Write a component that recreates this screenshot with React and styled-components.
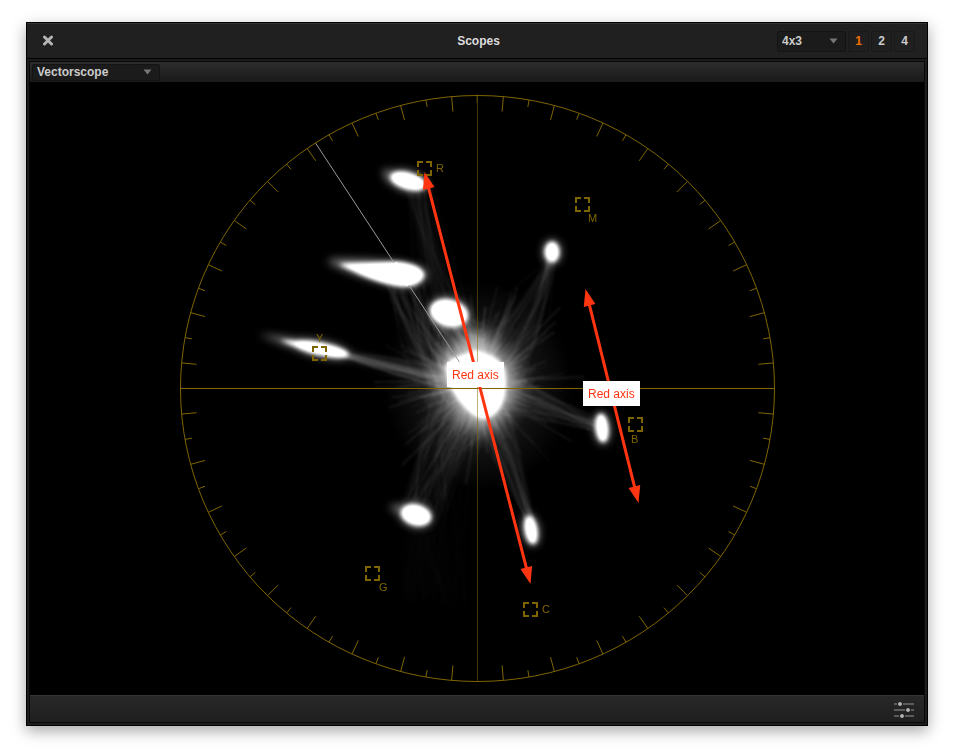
import React, { useState } from 'react'
import styled, { createGlobalStyle } from 'styled-components';

const CX = 477.5;
const CY = 388.5;
const RX = 297;
const RY = 293;
const GOLD = '#7f6500';
const RED = '#ff3512';

// small seeded generator, keeps the trace the same on every render
const seeded = (seed) => () => {
    seed = (seed * 16807) % 2147483647;
    return seed / 2147483647;
}

const targets = [
    { name: 'R', x: 417, y: 161, tx: 436, ty: 172 },
    { name: 'M', x: 575, y: 197, tx: 588, ty: 222 },
    { name: 'B', x: 628, y: 417, tx: 631, ty: 443 },
    { name: 'Y', x: 312, y: 346, tx: 316, ty: 342 },
    { name: 'G', x: 365, y: 566, tx: 379, ty: 591 },
    { name: 'C', x: 523, y: 602, tx: 542, ty: 613 },
];

const blobs = [
    { x: 408, y: 181, rx: 18, ry: 8, rot: 16 },
    { x: 449, y: 313, rx: 19, ry: 13, rot: 15 },
    { x: 321, y: 349, rx: 28, ry: 6, rot: 12 },
    { x: 552, y: 252, rx: 7, ry: 10, rot: 0 },
    { x: 602, y: 428, rx: 6, ry: 14, rot: -6 },
    { x: 531, y: 530, rx: 6, ry: 14, rot: -10 },
    { x: 416, y: 515, rx: 15, ry: 10, rot: 14 },
];

// from / to points with their spread, and how far the middle bows sideways
const beams = [
    { from: [470, 370], to: [418, 190], spread: [20, 14], bow: [-24, 6], count: 50, alpha: 0.02 },
    { from: [450, 390], to: [405, 284], spread: [20, 20], bow: [-14, 10], count: 44, alpha: 0.035 },
    { from: [465, 382], to: [335, 352], spread: [12, 5], bow: [0, 4], count: 34, alpha: 0.035 },
    { from: [465, 350], to: [445, 318], spread: [28, 16], bow: [0, 0], count: 40, alpha: 0.05 },
    { from: [490, 365], to: [552, 258], spread: [34, 5], bow: [20, 12], count: 50, alpha: 0.023 },
    { from: [495, 388], to: [598, 426], spread: [22, 10], bow: [4, 0], count: 50, alpha: 0.027 },
    { from: [488, 405], to: [530, 520], spread: [22, 5], bow: [2, -6], count: 50, alpha: 0.022 },
    { from: [465, 400], to: [424, 508], spread: [36, 24], bow: [-12, -10], count: 70, alpha: 0.025 },
    { from: [460, 410], to: [435, 590], spread: [30, 34], bow: [-16, 0], count: 50, alpha: 0.009 },
    { from: [420, 520], to: [430, 596], spread: [12, 26], bow: [-6, 0], count: 36, alpha: 0.008 },
];

const makeBeam = ({ from, to, spread, bow, count }, index) => {
    const rnd = seeded(301 + index * 97);
    const jitter = (amount) => (rnd() - 0.5) * 2 * amount;
    return Array.from({ length: count }, () => {
        const x1 = from[0] + jitter(spread[0]);
        const y1 = from[1] + jitter(spread[0]);
        const x2 = to[0] + jitter(spread[1]);
        const y2 = to[1] + jitter(spread[1] / 2);
        const mx = (x1 + x2) / 2 + bow[0] * rnd() + jitter(9);
        const my = (y1 + y2) / 2 + bow[1] * rnd() + jitter(9);
        return `M${x1} ${y1}Q${mx} ${my} ${x2} ${y2}`;
    });
}

const makeRays = () => {
    const rnd = seeded(77);
    return Array.from({ length: 340 }, () => {
        const a = rnd() * Math.PI * 2;
        const inner = 18 + rnd() * 22;
        const reach = inner + 10 + rnd() * rnd() * 80;
        const bend = a + (rnd() - 0.5) * 0.3;
        return {
            d: `M${478 + Math.cos(a) * inner} ${384 + Math.sin(a) * inner}L${478 + Math.cos(bend) * reach} ${384 + Math.sin(bend) * reach}`,
            alpha: 0.02 + rnd() * 0.06
        };
    });
}

const beamPaths = beams.map(makeBeam);
const rays = makeRays();

const ticks = [];
for (let deg = 5; deg < 360; deg += 5) {
    if (deg % 90 === 0) continue;
    const a = deg * Math.PI / 180;
    const x = CX + Math.cos(a) * RX;
    const y = CY + Math.sin(a) * RY;
    const len = deg % 10 === 5 ? 15 : 7;
    ticks.push(`M${x} ${y}L${x - Math.cos(a) * len} ${y - Math.sin(a) * len}`);
}

function Blobs({ grow }) {
    return blobs.map((b, i) => (
        <ellipse key={i} cx={b.x} cy={b.y} rx={b.rx + grow} ry={b.ry + grow}
            transform={`rotate(${b.rot} ${b.x} ${b.y})`} />
    ));
}

function Trace() {
    return (
        <g>
            <ellipse cx="478" cy="386" rx="95" ry="105" fill="url(#haze)" />
            <g fill="none" stroke="#fff" strokeWidth="2" filter="url(#soft1)">
                {beamPaths.map((paths, i) =>
                    paths.map((d, j) => <path key={`${i}-${j}`} d={d} opacity={beams[i].alpha} />)
                )}
                {rays.map((ray, i) => <path key={i} d={ray.d} opacity={ray.alpha} />)}
            </g>
            <g fill="#fff" filter="url(#soft4)" opacity="0.55">
                <Blobs grow={2} />
                <path d="M328 260C350 259 380 260 400 262C416 264 426 268 427 275C425 284 414 289 400 287C376 282 352 274 328 262Z" />
                <path d="M382 170L402 172L402 184L388 182Z" />
                <path d="M258 334L310 341L300 350Z" />
                <path d="M340 350L450 376L450 384L340 357Z" opacity="0.3" />
                <path d="M388 506L410 505L410 520Z" />
            </g>
            <g fill="#fff" filter="url(#soft2)">
                <Blobs grow={0} />
                <path d="M339 264C358 263 378 263 396 262C412 263 423 268 424 275C422 283 412 287 400 286C376 283 358 273 339 264Z" />
                <path d="M280 340L305 342L302 349Z" />
            </g>
            <path d="M440 366C446 350 462 346 474 326C490 346 506 356 511 374C516 400 500 424 480 427C462 420 444 394 440 366Z"
                fill="#fff" opacity="0.6" filter="url(#soft8)" />
            <path d="M446 366C450 357 466 354 476 350C488 354 502 358 505 372C508 400 500 417 482 419C466 414 446 388 446 366Z"
                fill="#fff" filter="url(#soft2)" />
        </g>
    );
}

function Graticule() {
    return (
        <g fill="none" stroke={GOLD}>
            <ellipse cx={CX} cy={CY} rx={RX} ry={RY} />
            <path d={ticks.join('')} />
            <path d={`M180 ${CY}H775`} />
            <path d={`M${CX} 96V682`} opacity="0.5" />
            <path d="M477 94V103" opacity="0.6" />
            {targets.map((t) => (
                <path key={t.name} transform={`translate(${t.x} ${t.y})`} strokeWidth="2"
                    d="M1 6V1H6M9 1H14V6M14 9V14H9M6 14H1V9" />
            ))}
            {targets.map((t) => (
                <ScopeText key={t.name} $size={11} x={t.tx} y={t.ty} fill={GOLD}>{t.name}</ScopeText>
            ))}
        </g>
    );
}

function Arrow({ from, to }) {
    const length = Math.hypot(to[0] - from[0], to[1] - from[1]);
    const angle = Math.atan2(to[1] - from[1], to[0] - from[0]) * 180 / Math.PI;
    return (
        <g fill={RED} transform={`translate(${from}) rotate(${angle})`}>
            <path d={`M15 0H${length - 15}`} stroke={RED} strokeWidth="3" />
            <path d="M0 0L17 6V-6Z" />
            <path d={`M${length} 0l-17 6v-12Z`} />
        </g>
    );
}

function AxisLabel({ x, y }) {
    return (
        <g>
            <rect x={x} y={y} width="57" height="25" fill="#fff" />
            <ScopeText $size={12} x={x + 5} y={y + 17} fill={RED}>Red axis</ScopeText>
        </g>
    );
}

function Picker({ label, value, wide }) {
    return (
        <PickerBox $wide={wide}>
            <select aria-label={label} defaultValue={value}>
                <option>{value}</option>
            </select>
            <svg width="9" height="6" viewBox="0 0 9 6"><path d="M0.5 0.5H8.5L4.5 5.5Z" fill="#777" /></svg>
        </PickerBox>
    );
}

export default function App() {
    const [layout, setLayout] = useState(1);

    return (
        <Page>
            <GlobalStyle />
            <Window>
                <Header>
                    <CloseButton aria-label="Close">
                        <svg width="12" height="12" viewBox="0 0 12 12">
                            <path d="M2.5 2L9.5 9M9.5 2L2.5 9" stroke="#b4b4b4" strokeWidth="3" strokeLinecap="round" />
                        </svg>
                    </CloseButton>
                    <h1>Scopes</h1>
                    <Controls>
                        <Picker label="Grid" value="4x3" />
                        {[1, 2, 4].map((n) => (
                            <CountButton key={n} $active={layout === n} onClick={() => setLayout(n)}>{n}</CountButton>
                        ))}
                    </Controls>
                </Header>
                <Panel>
                    <Toolbar>
                        <Picker label="Scope" value="Vectorscope" wide />
                    </Toolbar>
                    <Scope viewBox="30 82 894 613">
                        <defs>
                            {[1, 2, 4, 8].map((n) => (
                                <filter key={n} id={`soft${n}`} filterUnits="userSpaceOnUse" x="30" y="82" width="894" height="613"
                                    colorInterpolationFilters="sRGB">
                                    <feGaussianBlur stdDeviation={n} />
                                    {n === 2 && (
                                        <feComponentTransfer>
                                            <feFuncA type="linear" slope="1.3" />
                                        </feComponentTransfer>
                                    )}
                                </filter>
                            ))}
                            <radialGradient id="haze">
                                <stop offset="0" stopColor="#fff" stopOpacity="0.5" />
                                <stop offset="0.4" stopColor="#fff" stopOpacity="0.22" />
                                <stop offset="0.6" stopColor="#fff" stopOpacity="0.07" />
                                <stop offset="1" stopColor="#fff" stopOpacity="0" />
                            </radialGradient>
                        </defs>
                        <Trace />
                        <path d="M315.5 143L462 366" stroke="#999" />
                        {/* the trace stays white where the skin tone line runs through it */}
                        <path d="M393 263L397 262L413 284L406 286Z" fill="#fff" />
                        <Graticule />
                        <Arrow from={[424.5, 172]} to={[530.5, 584]} />
                        <Arrow from={[585.5, 289]} to={[638.5, 503]} />
                        <AxisLabel x={447} y={362} />
                        <AxisLabel x={583} y={381} />
                    </Scope>
                    <Footer>
                        <IconButton aria-label="Scope settings">
                            <svg width="20" height="18" viewBox="0 0 20 18">
                                <path d="M0 3H20M0 9H20M0 15H20" stroke="#5c5c5c" strokeWidth="2" />
                                <g fill="#b4b4b4" stroke="#151515" strokeWidth="1">
                                    <circle cx="6" cy="3" r="2.5" />
                                    <circle cx="14" cy="9" r="2.5" />
                                    <circle cx="8" cy="15" r="2.5" />
                                </g>
                            </svg>
                        </IconButton>
                    </Footer>
                </Panel>
            </Window>
        </Page>
    );
}

const GlobalStyle = createGlobalStyle`
    *{
        box-sizing: border-box;
    }
    body{
        margin: 0;
        background-color: #fff;
        font-family: "Liberation Sans", Arial, sans-serif;
    }
    button, select{
        font-family: inherit;
        font-size: 12px;
        font-weight: bold;
        cursor: pointer;
    }
`;

const Page = styled.div`
    padding: 22px 26px 30px;
`;

const Window = styled.section`
    background-color: #1c1c1c;
    border: 1px solid #000;
    padding-bottom: 2px;
    box-shadow: 0 5px 14px rgba(0,0,0,0.35);
`;

const Header = styled.header`
    display: grid;
    grid-template-columns: 1fr auto 1fr;
    align-items: center;
    height: 36px;
    padding: 0 12px 0 15px;
    background-color: #202020;
    border-top: 1px solid #333;
    border-bottom: 1px solid #000;
    h1{
        margin: 0;
        font-size: 12px;
        line-height: 16px;
        color: #ddd;
    }
`;

const CloseButton = styled.button`
    justify-self: start;
    display: flex;
    padding: 0;
    border: none;
    background: none;
`;

const Controls = styled.div`
    display: flex;
    justify-content: flex-end;
    gap: 2px;
`;

const PickerBox = styled.div`
    position: relative;
    width: ${({ $wide }) => $wide ? "128px" : "69px"};
    height: ${({ $wide }) => $wide ? "17px" : "21px"};
    select{
        appearance: none;
        display: block;
        width: 100%;
        height: 100%;
        padding: 0 4px;
        border: 1px solid #141414;
        border-radius: 2px;
        background-color: #1b1b1b;
        color: #ccc;
    }
    svg{
        position: absolute;
        right: 8px;
        top: calc(50% - 3px);
        pointer-events: none;
    }
`;

const CountButton = styled.button`
    width: 21px;
    height: 21px;
    padding: 0;
    border: 1px solid #191919;
    border-radius: 2px;
    background-color: #1f1f1f;
    color: ${({ $active }) => $active ? "#f07000" : "#ccc"};
`;

const Panel = styled.div`
    margin: 2px 2px 0;
    border: 1px solid #080808;
    background-color: #000;
`;

const Toolbar = styled.div`
    display: flex;
    align-items: center;
    height: 20px;
    padding: 0 2px;
    background: linear-gradient(#2c2c2c, #1a1a1a);
`;

const Scope = styled.svg`
    display: block;
    width: 100%;
    height: auto;
    background-color: #000;
`;

const ScopeText = styled.text`
    font-size: ${({ $size }) => $size}px;
    stroke: none;
`;

const Footer = styled.footer`
    display: flex;
    align-items: center;
    justify-content: flex-end;
    height: 27px;
    padding: 2px 10px 0;
    border-top: 1px solid #353535;
    background: linear-gradient(#282828, #1f1f1f);
`;

const IconButton = styled.button`
    display: flex;
    padding: 0;
    border: none;
    background: none;
`;
